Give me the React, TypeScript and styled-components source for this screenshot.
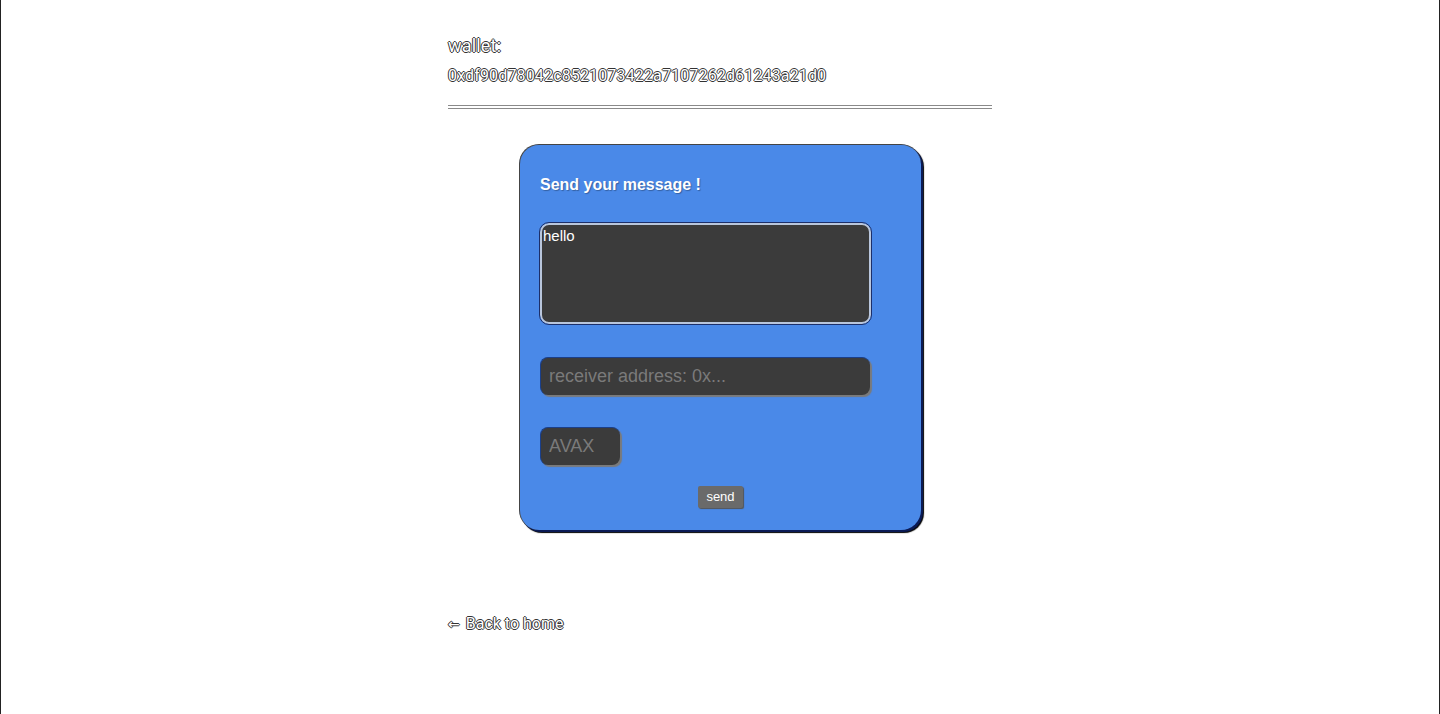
import React from "react";
import styled, { createGlobalStyle } from "styled-components";

const Global = createGlobalStyle`
  html, body { margin: 0; padding: 0; background: #fff; }
  body {
    font-family: Roboto, "Noto Sans", sans-serif;
    -webkit-font-smoothing: antialiased;
  }
`;

const Page = styled.div`
  min-height: 714px;
  box-sizing: border-box;
  border-left: 1px solid #222;
  border-right: 1px solid #222;
`;

const Main = styled.main`
  width: 544px;
  margin: 0 auto;
  padding-top: 35px;
`;

const Outlined = styled.div<{ $size: number }>`
  color: #fff;
  font-size: ${(p) => p.$size}px;
  text-shadow: -1px 0 #333, 1px 0 #333, 0 -1px #333, 0 1px #333;
`;

const WalletLabel = styled(Outlined)`
  line-height: 22px;
  letter-spacing: 0.2px;
`;

const Address = styled(Outlined)`
  margin-top: 9px;
  line-height: 20px;
  letter-spacing: 0.15px;
`;

const Rule = styled.hr`
  margin: 19px 0 0;
  border: 0;
  border-top: 1px solid #8a8a8a;
  border-bottom: 1px solid #8a8a8a;
  height: 2px;
`;

const Card = styled.section`
  margin: 35px auto 0;
  width: 402px;
  height: 386px;
  box-sizing: border-box;
  background: #4a89e8;
  border-radius: 20px;
  border-top: 1px solid #444;
  border-left: 1px solid #444;
  box-shadow: 2px 2px 0 #0a1a55, 3px 3px 1px #000;
  padding: 31px 20px 0;
  display: flex;
  flex-direction: column;
  font-family: "Liberation Sans", Arial, sans-serif;
`;

const Title = styled.h2`
  margin: 0;
  color: #fff;
  font-size: 16px;
  font-weight: bold;
  text-shadow: 1px 1px 1px rgba(0, 0, 0, 0.3);
`;

const MessageBox = styled.textarea`
  margin-top: 29px;
  width: 331px;
  height: 101px;
  box-sizing: border-box;
  background: #3b3b3b;
  color: #fff;
  border: 2px solid #b9c6dc;
  outline: 1px solid #1c2f6a;
  border-radius: 9px;
  padding: 2px 1px;
  font-family: "Liberation Sans", Arial, sans-serif;
  font-size: 15px;
  resize: none;
`;

const Field = styled.input<{ $width: number }>`
  width: ${(p) => p.$width}px;
  height: 38px;
  box-sizing: border-box;
  background: #3b3b3b;
  color: #fff;
  border: 0;
  border-top: 1px solid #1a3f8a;
  border-left: 1px solid #1a3f8a;
  border-radius: 8px;
  box-shadow: 2px 2px 1px #7a7a7a;
  padding: 0 8px;
  font-family: "Liberation Sans", Arial, sans-serif;
  font-size: 18px;
  &::placeholder { color: #7a7a7a; }
`;

const AddressField = styled(Field)`
  margin-top: 33px;
`;

const AmountField = styled(Field)`
  margin-top: 32px;
`;

const SendButton = styled.button`
  align-self: center;
  margin-top: 21px;
  background: #6a6a6a;
  color: #fff;
  border: 0;
  border-radius: 2px;
  box-shadow: 1px 1px 1px #555;
  padding: 4px 8px 4px;
  font-family: "Liberation Sans", Arial, sans-serif;
  font-size: 13px;
  line-height: 14px;
`;

const BackLink = styled(Outlined)`
  margin-top: 84px;
  line-height: 20px;
`;

const Arrow = styled.span`
  font-family: "DejaVu Sans", sans-serif;
  font-size: 14px;
  margin-right: 2px;
`;

export default function App() {
  return (
    <Page>
      <Global />
      <Main>
        <WalletLabel $size={18}>wallet:</WalletLabel>
        <Address $size={16}>0xdf90d78042c8521073422a7107262d61243a21d0</Address>
        <Rule />
        <Card>
          <Title>Send your message !</Title>
          <MessageBox defaultValue="hello" />
          <AddressField $width={330} placeholder="receiver address: 0x..." />
          <AmountField $width={80} placeholder="AVAX" />
          <SendButton>send</SendButton>
        </Card>
        <BackLink $size={16}>
          <Arrow>←</Arrow> Back to home
        </BackLink>
      </Main>
    </Page>
  );
}
